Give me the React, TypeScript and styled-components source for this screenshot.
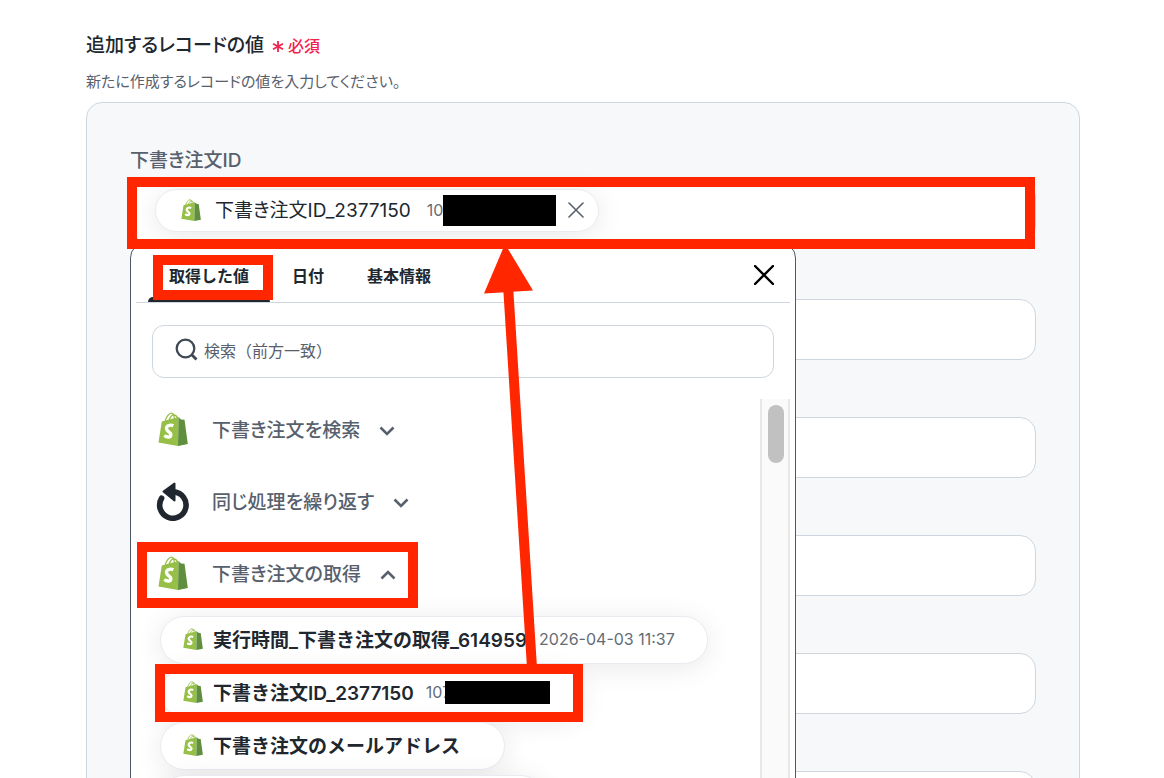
import React from 'react';
import styled, { createGlobalStyle, css } from 'styled-components';

const RED = '#ff2600';

const GlobalStyle = createGlobalStyle`
  * { box-sizing: border-box; }
  body {
    margin: 0;
    background: #fff;
    color: #20272e;
    font-family: Inter, "Noto Sans CJK JP", sans-serif;
    font-feature-settings: "palt";
  }
  button, input { font: inherit; color: inherit; }
`;

const Page = styled.main`
  height: 100vh;
  overflow: hidden;
  padding: 33px 84px 0 86px;
`;

const Heading = styled.h1`
  display: flex;
  align-items: center;
  gap: 8px;
  margin: 0;
  font-size: 19px;
  font-weight: 500;
  line-height: 26px;
`;

const Required = styled.span`
  display: flex;
  align-items: center;
  gap: 4px;
  color: #f2224f;
  font-size: 16px;
`;

const Hint = styled.p`
  margin: 11px 0 8px;
  color: #57606c;
  font-size: 15px;
  line-height: 24px;
`;

const Panel = styled.section`
  display: flex;
  flex-direction: column;
  gap: 26px;
  padding: 47px 43px;
  border: 1px solid #cfd6de;
  border-radius: 16px;
  background: #f6f8fa;
`;

const Field = styled.div`
  position: relative;
  display: flex;
  flex-direction: column;
  gap: 9px;
`;

const Label = styled.label`
  height: 22px;
  color: #57606c;
  font-size: 19px;
  font-weight: 500;
  line-height: 22px;
`;

const boxed = css`
  height: 61px;
  border: 1px solid #cfd6de;
  border-radius: 16px;
  background: #fff;
`;

const TextInput = styled.input`
  ${boxed}
  width: 100%;
  padding: 0 24px;
  font-size: 16px;
`;

const TokenBox = styled.div`
  ${boxed}
  display: flex;
  align-items: center;
  padding: 0 24px 3px;
`;

const pill = css`
  display: flex;
  align-items: center;
  border: 1px solid #e9ebf0;
  border-radius: 24px;
  background: #fff;
  box-shadow: 0 4px 28px rgba(0, 0, 0, 0.09);
  white-space: nowrap;
`;

const Token = styled.div`
  ${pill}
  height: 43px;
  padding: 0 14px 0 25px;
  font-size: 19px;
`;

const TokenName = styled.span`
  margin: 0 16px 0 14px;
  padding-bottom: 3px;
`;

const Sample = styled.span`
  color: #646b75;
  font-size: 16px;
  font-weight: 400;
`;

const Redaction = styled.span<{ $w: number; $h: number }>`
  flex: none;
  width: ${(p) => p.$w}px;
  height: ${(p) => p.$h}px;
  background: #000;
`;

const OverlapRedaction = styled(Redaction)`
  margin-left: -6px;
`;

const IconButton = styled.button`
  display: flex;
  padding: 0;
  border: 0;
  background: none;
  cursor: pointer;
`;

const RemoveButton = styled(IconButton)`
  margin-left: 12px;
`;

const Popover = styled.div`
  position: absolute;
  top: 92px;
  left: 0;
  z-index: 2;
  width: 666px;
  padding: 4px 5px 0;
  border: 1px solid #4f5965;
  border-radius: 16px;
  background: #fff;
`;

const TabBar = styled.div`
  display: flex;
  align-items: center;
  gap: 1px;
  height: 56px;
  padding: 0 16px 0 12px;
  border-bottom: 1px solid #cfd6de;
`;

const Tab = styled.button<{ $active?: boolean }>`
  position: relative;
  height: 55px;
  padding: 0 21px;
  border: 0;
  background: none;
  font-size: 16px;
  font-weight: 700;
  font-feature-settings: normal;
  white-space: nowrap;
  cursor: pointer;
  ${(p) =>
    p.$active &&
    css`
      &::after {
        content: '';
        position: absolute;
        left: 0;
        right: 0;
        bottom: 0;
        height: 5px;
        border-radius: 5px 5px 0 0;
        background: #20272e;
      }
    `}
`;

const Spacer = styled.span`
  flex: 1;
`;

const Search = styled.label`
  display: flex;
  align-items: center;
  gap: 6px;
  height: 53px;
  margin: 22px 16px 21px;
  padding: 0 22px 2px;
  border: 1px solid #cfd6de;
  border-radius: 12px;
`;

const SearchInput = styled.input`
  flex: 1;
  min-width: 0;
  padding: 0;
  border: 0;
  outline: 0;
  background: none;
  font-size: 16px;
  font-feature-settings: normal;
  &::placeholder { color: #57606c; opacity: 1; }
`;

const Results = styled.div`
  display: flex;
  height: 560px;
`;

const List = styled.div`
  flex: 1;
  min-width: 0;
  overflow: hidden;
  padding: 0 20px;
  margin-top: -6px;
`;

const Track = styled.div`
  width: 30px;
  padding: 6px 6px 0;
  border: solid #e8e8e8;
  border-width: 0 2px;
  background: #fafafa;
`;

const Thumb = styled.div`
  width: 16px;
  height: 58px;
  border-radius: 8px;
  background: #c1c1c1;
`;

const Group = styled.button`
  display: flex;
  align-items: center;
  height: 72px;
  padding: 0;
  border: 0;
  background: none;
  color: #57606c;
  font-size: 19px;
  font-weight: 500;
  font-feature-settings: "palt";
  cursor: pointer;
`;

const GroupIcon = styled.span`
  display: flex;
  justify-content: center;
  width: 34px;
  margin-right: 22px;
`;

const GroupName = styled.span`
  margin-right: 19px;
  padding-bottom: 2px;
`;

const Items = styled.div`
  display: flex;
  flex-direction: column;
  align-items: flex-start;
  gap: 5px;
  margin: 7px 0 0 4px;
`;

const Item = styled.button`
  ${pill}
  height: 48px;
  padding: 0 32px 2px 22px;
  font-size: 19px;
  font-weight: 600;
  font-feature-settings: normal;
  cursor: pointer;
`;

const ItemName = styled.span`
  margin: 0 12px 0 10px;
  padding-bottom: 2px;
`;

const NextItem = styled.div`
  ${pill}
  width: 385px;
  height: 48px;
`;

const Annotations = styled.div`
  position: absolute;
  inset: 0;
  z-index: 3;
  overflow: hidden;
  pointer-events: none;
`;

const Mark = styled.div<{ $x: number; $y: number; $w: number; $h: number }>`
  position: absolute;
  left: ${(p) => p.$x}px;
  top: ${(p) => p.$y}px;
  width: ${(p) => p.$w}px;
  height: ${(p) => p.$h}px;
  border: 10px solid ${RED};
`;

const FieldMark = styled(Mark)`
  width: auto;
  right: 129px;
`;

const Arrow = styled.svg`
  position: absolute;
  left: 480px;
  top: 244px;
`;

const Bag = ({ w, h }: { w: number; h: number }) => (
  <svg width={w} height={h} viewBox="0 0 30 34" preserveAspectRatio="none" aria-hidden="true">
    <path d="M7 10C8 4.500 11 1.200 13.500 1.200S16.500 4 16.500 9M11 9C12 4 14.500 2.500 16.500 3S19.500 6 19.500 8" fill="none" stroke="#95bf47" strokeWidth="1.300" />
    <path d="M3.800 9.500 20.500 5 20 34 .5 30.500Z" fill="#95bf47" />
    <path d="M20.500 5 23 7.500 26.500 7.800 29.800 32 20 34Z" fill="#5e8e3e" />
    <path d="M15.300 13.800C12 12.200 8.500 13.600 8.500 16.600 8.500 19.800 13 20.100 12.800 22.800 12.600 25.600 9 25.600 6.300 23.500" fill="none" stroke="#fff" strokeWidth="3.400" />
  </svg>
);

const Asterisk = () => (
  <svg width="12" height="14" viewBox="0 0 12 14" aria-hidden="true">
    <path d="M6 2v11M1 4.800l10 5.400M11 4.800 1 10.200" stroke="#f2224f" strokeWidth="1.800" />
  </svg>
);

const Cross = ({ size, color, weight }: { size: number; color: string; weight: number }) => (
  <svg width={size} height={size} viewBox={`0 0 ${size} ${size}`} aria-hidden="true">
    <path d={`M1 1 ${size - 1} ${size - 1}M${size - 1} 1 1 ${size - 1}`} stroke={color} strokeWidth={weight} strokeLinecap="round" />
  </svg>
);

const Magnifier = () => (
  <svg width="23" height="25" viewBox="0 0 23 25" fill="none" stroke="#3f4854" strokeWidth="2.300" aria-hidden="true">
    <circle cx="10.500" cy="10.500" r="8.800" />
    <path d="m16.500 16.500 5 5" strokeWidth="2.800" />
  </svg>
);

const Chevron = ({ up }: { up?: boolean }) => (
  <svg width="16" height="14" viewBox="0 -4 16 14" aria-hidden="true">
    <path d={up ? 'M1.500 8.500 8 2l6.500 6.500' : 'M1.500 1.500 8 8l6.500-6.500'} fill="none" stroke="#57606c" strokeWidth="2.600" />
  </svg>
);

const Loop = () => (
  <svg width="34" height="40" viewBox="0 0 34 40" aria-hidden="true">
    <path d="M5.600 17.200A13.200 13.200 0 1 0 18 10.900" fill="none" stroke="#20272e" strokeWidth="5.600" strokeLinecap="round" />
    <path d="M7.500 10.500 18.500 2.500v17Z" fill="#20272e" stroke="#20272e" strokeWidth="2" strokeLinejoin="round" />
  </svg>
);

const otherFields = ['record-2', 'record-3', 'record-4', 'record-5', 'record-6'];

export default function App() {
  return (
    <Page>
      <GlobalStyle />
      <Heading>
        追加するレコードの値
        <Required><Asterisk />必須</Required>
      </Heading>
      <Hint>新たに作成するレコードの値を入力してください。</Hint>
      <Panel>
        <Field>
          <Label as="div">下書き注文ID</Label>
          <TokenBox>
            <Token>
              <Bag w={20} h={22} />
              <TokenName>下書き注文ID_2377150</TokenName>
              <Sample>10</Sample>
              <Redaction $w={113} $h={31} />
              <RemoveButton aria-label="削除"><Cross size={16} color="#57606c" weight={1.6} /></RemoveButton>
            </Token>
          </TokenBox>
          <Popover>
            <TabBar role="tablist">
              <Tab role="tab" aria-selected $active>取得した値</Tab>
              <Tab role="tab">日付</Tab>
              <Tab role="tab">基本情報</Tab>
              <Spacer />
              <IconButton aria-label="閉じる"><Cross size={20} color="#000" weight={2.4} /></IconButton>
            </TabBar>
            <Search>
              <Magnifier />
              <SearchInput type="text" aria-label="検索" placeholder="検索（前方一致）" />
            </Search>
            <Results>
              <List>
                <Group aria-expanded={false}>
                  <GroupIcon><Bag w={30} h={34} /></GroupIcon>
                  <GroupName>下書き注文を検索</GroupName>
                  <Chevron />
                </Group>
                <Group aria-expanded={false}>
                  <GroupIcon><Loop /></GroupIcon>
                  <GroupName>同じ処理を繰り返す</GroupName>
                  <Chevron />
                </Group>
                <Group aria-expanded>
                  <GroupIcon><Bag w={30} h={34} /></GroupIcon>
                  <GroupName>下書き注文の取得</GroupName>
                  <Chevron up />
                </Group>
                <Items>
                  <Item>
                    <Bag w={20} h={22} />
                    <ItemName>実行時間_下書き注文の取得_614959</ItemName>
                    <Sample>2026-04-03 11:37</Sample>
                  </Item>
                  <Item>
                    <Bag w={20} h={22} />
                    <ItemName>下書き注文ID_2377150</ItemName>
                    <Sample>107</Sample>
                    <OverlapRedaction $w={105} $h={23} />
                  </Item>
                  <Item>
                    <Bag w={20} h={22} />
                    <ItemName>下書き注文のメールアドレス</ItemName>
                  </Item>
                  <NextItem />
                </Items>
              </List>
              <Track><Thumb /></Track>
            </Results>
          </Popover>
        </Field>
        {otherFields.map((id) => (
          <Field key={id}>
            <Label htmlFor={id} />
            <TextInput id={id} type="text" />
          </Field>
        ))}
      </Panel>
      <Annotations>
        <FieldMark $x={127} $y={177} $w={908} $h={72} />
        <Mark $x={153} $y={255} $w={120} $h={45} />
        <Mark $x={137} $y={542} $w={281} $h={66} />
        <Mark $x={155} $y={664} $w={428} $h={58} />
        <Arrow width="80" height="430" viewBox="480 244 80 430" aria-hidden="true">
          <path d="M508 285 532 668" stroke={RED} strokeWidth="10" />
          <path d="M505 244 533 290.500 484 293.500Z" fill={RED} />
        </Arrow>
      </Annotations>
    </Page>
  );
}
